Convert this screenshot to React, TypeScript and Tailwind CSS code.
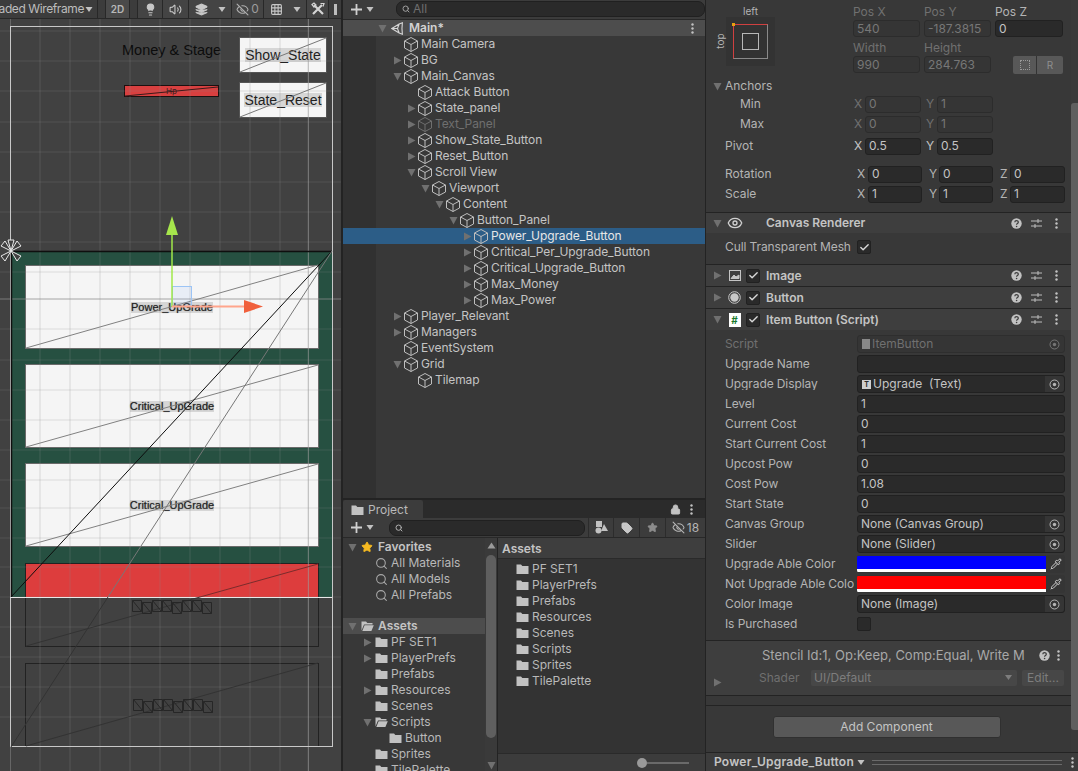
import React from "react";
import { Lightbulb, Volume2, Layers, EyeOff, Grid3x3, Lock, Tag, Star, Search, Check, Eye, Pipette } from "lucide-react";

const Tri = ({ dir, className = "" }: { dir: "r" | "d" | "u"; className?: string }) => (
  <svg width="10" height="10" viewBox="0.5 0.5 9 9" className={"shrink-0 " + className}>
    {dir === "r" && <polygon points="1.5,1 9,5 1.5,9" fill="#707070" />}
    {dir === "d" && <polygon points="1,1.5 9,1.5 5,9" fill="#707070" />}
    {dir === "u" && <polygon points="1,8 9,8 5,2" fill="#9a9a9a" />}
  </svg>
);

const Dots = ({ className = "" }: { className?: string }) => (
  <svg width="3" height="11" viewBox="0 0 3 11" className={"shrink-0 " + className}>
    <circle cx="1.5" cy="1.5" r="1.2" fill="#c2c2c2" />
    <circle cx="1.5" cy="5.5" r="1.2" fill="#c2c2c2" />
    <circle cx="1.5" cy="9.5" r="1.2" fill="#c2c2c2" />
  </svg>
);

const Caret = ({ className = "" }: { className?: string }) => (
  <svg width="8" height="5" viewBox="0 0 7 5" className={"shrink-0 " + className}><polygon points="0,0 7,0 3.5,5" fill="#c2c2c2" /></svg>
);

const Cube = ({ dim }: { dim?: boolean }) => (
  <svg width="14" height="15" viewBox="1 0.5 14 15" fill="none" stroke={dim ? "#6f6f6f" : "#bebebe"} strokeWidth="1" className="shrink-0">
    <path d="M8 1 14.5 4.5V11.5L8 15 1.5 11.5V4.5Z M1.5 4.5 8 8 14.5 4.5 M8 8V15" />
  </svg>
);

const Folder = ({ open }: { open?: boolean }) => (
  <svg width="13" height="12" viewBox="0 0 13 12" className="shrink-0">
    {open ? (
      <path d="M0.5 1.5H5L6.3 3H11.5V4.5H3L0.5 10.5ZM1.3 11 3.6 5.2H12.8L10.4 11Z" fill="#c2c2c2" />
    ) : (
      <path d="M0.5 1.5H5L6.3 3H12.5V11H0.5Z" fill="#c2c2c2" />
    )}
  </svg>
);

const UnityLogo = () => (
  <svg width="13" height="13" viewBox="0 0 16 16" fill="none" stroke="#d5d5d5" strokeWidth="1.4" className="shrink-0">
    <path d="M1 8 10 2.5 14 1 13.5 8 14 15 10 13.5Z M1 8H8L10 2.5 M8 8 10 13.5" />
  </svg>
);

const Row = ({ d, name, arrow, dim, sel }: { d: number; name: string; arrow?: "r" | "d"; dim?: boolean; sel?: boolean }) => {
  const pad = ["pl-[36px]", "pl-[50px]", "pl-[64px]", "pl-[78px]", "pl-[92px]", "pl-[106px]", "pl-[120px]"][d];
  return (
    <div className={"h-4 flex items-center " + pad + (sel ? " bg-[#2c5d87]" : "")}>
      <div className="w-[11px] shrink-0">{arrow && <Tri dir={arrow} className="w-[9px] h-[9px]" />}</div>
      <Cube dim={dim} />
      <span className={"ml-[3px] tracking-[-0.1px] " + (dim ? "text-[#6f6f6f]" : sel ? "text-[#e6e6e6]" : "text-[#c4c4c4]")}>{name}</span>
    </div>
  );
};

const Plus = () => (
  <div className="flex items-center gap-[3px] text-[#c8c8c8]">
    <svg width="13" height="13" viewBox="0 0 13 13"><path d="M6.5 1V12M1 6.5H12" stroke="#d0d0d0" strokeWidth="1.8" /></svg>
    <Caret />
  </div>
);

const TreeRow = ({ left, arrow, open, name }: { left: string; arrow?: "r" | "d"; open?: boolean; name: string }) => (
  <div className={"h-4 flex items-center " + left}>
    <div className="w-[12px] shrink-0">{arrow && <Tri dir={arrow} className="w-[9px] h-[9px]" />}</div>
    <Folder open={open} />
    <span className="ml-[3px] text-[#b9b9b9] whitespace-nowrap">{name}</span>
  </div>
);

const Field = ({ v, w, dim, h = "h-[17px]" }: { v: string; w: string; dim?: boolean; h?: string }) => (
  <div className={h + " " + w + " rounded-[3px] flex items-center px-[3px] shrink-0 " + (dim ? "bg-[#353535] border border-[#2c2c2c] text-[#777777]" : "bg-[#2a2a2a] border border-[#212121] text-[#c4c4c4]")}>
    {v}
  </div>
);

const Target = () => (
  <svg width="11" height="11" viewBox="0 0 11 11" className="shrink-0" fill="none">
    <circle cx="5.5" cy="5.5" r="4.5" stroke="#b5b5b5" strokeWidth="1" />
    <circle cx="5.5" cy="5.5" r="1.7" fill="#b5b5b5" />
  </svg>
);

const Help = () => (
  <svg width="11" height="11" viewBox="0 0 11 11" className="shrink-0"><circle cx="5.5" cy="5.5" r="5.2" fill="#c2c2c2" /><path d="M3.8 4.3c0-2.2 3.5-2.2 3.5 0 0 1.3-1.7 1.2-1.7 2.4" stroke="#3c3c3c" strokeWidth="1.2" fill="none" /><circle cx="5.6" cy="8.5" r=".8" fill="#3c3c3c" /></svg>
);

const HeaderTools = () => (
  <div className="ml-auto flex items-center text-[#bdbdbd] pr-[13px]">
    <Help />
    <svg width="11" height="11" viewBox="0 0 11 11" stroke="#bdbdbd" strokeWidth="1" fill="none" className="ml-[9px] mr-[13px]"><path d="M0 3H11M0 8H11M7 1V5M4 6V10" /></svg>
    <Dots />
  </div>
);

const Checkbox = ({ on = true }: { on?: boolean }) => (
  <div className="w-[14px] h-[14px] rounded-[2px] bg-[#2a2a2a] border border-[#212121] flex items-center justify-center shrink-0">
    {on && <Check size={11} strokeWidth={3} color="#d8d8d8" />}
  </div>
);

const CompHeader = ({ h, arrow, icon, check, title }: { h: string; arrow: "r" | "d"; icon: React.ReactNode; check?: boolean; title: string }) => (
  <div className={h + " flex items-center bg-[#3e3e3e] border-t border-[#232323] pl-[7px] shrink-0"}>
    <Tri dir={arrow} className="w-[9px] h-[9px]" />
    <div className="w-[17px] ml-[4px] flex justify-center shrink-0">{icon}</div>
    <div className="w-[17px] flex justify-end shrink-0">{check && <Checkbox />}</div>
    <span className="ml-[6px] font-semibold text-[#c4c4c4]">{title}</span>
    <HeaderTools />
  </div>
);

const PropRow = ({ label, dim, children }: { label: string; dim?: boolean; children: React.ReactNode }) => (
  <div className="h-5 flex items-center pl-[19px]">
    <div className={"w-[129px] mr-[3px] shrink-0 overflow-hidden whitespace-nowrap tracking-[-0.1px] " + (dim ? "text-[#707070]" : "text-[#b4b4b4]")}>{label}</div>
    {children}
  </div>
);

const Val = ({ children, dim }: { children?: React.ReactNode; dim?: boolean }) => (
  <div className={"w-[208px] h-[18px] rounded-[3px] flex items-center px-[3px] " + (dim ? "bg-[#353535] text-[#707070] border border-[#2e2e2e]" : "bg-[#2a2a2a] text-[#c4c4c4] border border-[#212121]")}>{children}</div>
);

const ObjVal = ({ text, icon }: { text: string; icon?: boolean }) => (
  <div className="w-[208px] h-[18px] rounded-[3px] flex items-center bg-[#2a2a2a] text-[#c4c4c4] border border-[#212121] pl-[2px]">
    {icon && <div className="w-[9px] h-[9px] bg-[#cfcfcf] mr-[2px] ml-[2px] flex items-center justify-center text-[7px] leading-none font-bold text-[#2a2a2a]">T</div>}
    <span className={"whitespace-pre " + (icon ? "" : "ml-[1px]")}>{text}</span>
    <div className="ml-auto w-[19px] h-full bg-[#353535] rounded-r-[3px] flex items-center justify-center"><Target /></div>
  </div>
);

const ColorVal = ({ bg }: { bg: string }) => (
  <div className="w-[208px] h-[18px] rounded-[3px] flex items-stretch bg-[#353535] overflow-hidden">
    <div className="w-[189px] h-[16px] flex flex-col mt-px">
      <div className={"flex-1 " + bg} />
      <div className="h-[3px] bg-white" />
    </div>
    <div className="flex-1 flex items-center justify-center"><Pipette size={12} color="#d0d0d0" /></div>
  </div>
);

const WireText = ({ text, cls }: { text: string; cls: string }) => (
  <span className={"leading-none whitespace-nowrap [font-family:'Liberation_Sans',sans-serif] " + cls}>{text}</span>
);

const BigBtn = ({ top, text }: { top: string; text: string }) => (
  <div className={"absolute left-[25px] w-[294px] h-[84px] bg-[#f5f5f5] border border-[#6a6a6a] flex items-center justify-center " + top}>
    <WireText text={text} cls="text-[11px] text-[#222222] bg-[#c9c9c9]/70 [text-shadow:0_0_1px_#666]" />
  </div>
);

const gridV = [40, 70, 100, 130, 160, 190, 220, 250, 280, 308];
const gridH = [31, 61, 91, 122, 152, 182, 212, 242, 272, 299, 329, 360, 390, 420, 450, 480, 508, 538, 567, 597, 627, 657, 687, 717];

const glyphBoxes = (x: number, y: number, key: string, count: number) => {
  const out: React.ReactNode[] = [];
  for (let i = 0; i < count; i++) {
    const cx = x + i * 10;
    const dy = i % 3 === 1 ? 2 : 0;
    out.push(<path key={key + i} d={`M${cx + 0.5} ${y + dy + 0.5}h9v11h-9zM${cx + 0.5} ${y + dy + 0.5}l9 11`} stroke="#262626" strokeWidth="1" fill="none" />);
  }
  return out;
};

const SceneOverlay = () => (
  <svg width="341" height="752" viewBox="0 19 341 752" className="absolute left-0 top-0">
    {gridV.map((x) => <line key={"v" + x} x1={x} x2={x} y1="19" y2="771" stroke="#8c8c8c" strokeOpacity="0.28" />)}
    {gridH.map((y) => <line key={"h" + y} y1={y} y2={y} x1="0" x2="341" stroke="#8c8c8c" strokeOpacity="0.24" />)}
    <line x1="0" x2="341" y1="299" y2="299" stroke="#8c8c8c" strokeOpacity="0.6" />
    <line x1="10.5" x2="10.5" y1="19" y2="771" stroke="#8c8c8c" strokeOpacity="0.5" />
    <line x1="308.5" x2="308.5" y1="19" y2="771" stroke="#a0a0a0" strokeOpacity="0.5" />
    <rect x="10.5" y="26.5" width="322" height="720" fill="none" stroke="#c8c8c8" />
    <line x1="10.5" x2="332" y1="597.5" y2="597.5" stroke="#e8e8e8" />
    <path d="M11.5 597V251.5H332" stroke="#0f0f0f" fill="none" strokeWidth="1.5" />
    <line x1="240" y1="72" x2="326" y2="38" stroke="#777" />
    <line x1="240" y1="117" x2="326" y2="83" stroke="#777" />
    <line x1="125" y1="96" x2="218" y2="87" stroke="#3a1a1a" />
    <line x1="26" y1="348" x2="318" y2="265" stroke="#808080" />
    <line x1="26" y1="447" x2="318" y2="365" stroke="#808080" />
    <line x1="26" y1="546" x2="318" y2="464" stroke="#808080" />
    <line x1="26" y1="646" x2="200" y2="597" stroke="#333" />
    <line x1="200" y1="597" x2="318" y2="564" stroke="#7a2c2c" />
    <line x1="26" y1="746" x2="318" y2="663" stroke="#333" />
    <line x1="11" y1="597" x2="332" y2="251" stroke="#0d0d0d" strokeWidth="1" />
    <line x1="108" y1="597" x2="332" y2="251" stroke="#777" />
    <line x1="11" y1="747" x2="108" y2="597" stroke="#333" />
    {glyphBoxes(132, 600, "a", 8)}
    {glyphBoxes(133, 699, "b", 8)}
    <rect x="172.5" y="286.5" width="19" height="20" fill="#8ab8ff" fillOpacity="0.12" stroke="#9cc4f5" />
    <line x1="172" y1="233" x2="172" y2="307" stroke="#a0e84a" strokeWidth="1.5" />
    <polygon points="172,216 166,235 178,235" fill="#a6e64c" />
    <line x1="172" y1="306.5" x2="246" y2="306.5" stroke="#ffa58c" strokeWidth="2" />
    <polygon points="263,306.5 244,300 244,313" fill="#f0603c" />
    <g stroke="#e8e8e8" fill="#404040" strokeWidth="1">
      <path d="M11 251 L1 246 L5 241Z" />
      <path d="M11 251 L8 240 L14 240Z" />
      <path d="M11 251 L21 246 L17 241Z" />
      <path d="M11 251 L1 256 L5 261Z" />
      <path d="M11 251 L21 256 L17 261Z" />
    </g>
  </svg>
);

const Scene = () => (
  <div className="w-[341px] h-full flex flex-col shrink-0">
    <div className="h-[19px] bg-[#3c3c3c] flex items-center text-[#bdbdbd] border-b border-[#282828] shrink-0 overflow-hidden">
      <div className="w-[98px] h-full flex items-center justify-end overflow-hidden border-r border-[#282828] shrink-0">
        <span className="whitespace-nowrap tracking-[-0.4px]">Shaded Wireframe</span>
        <Caret className="ml-[1px] mr-[4px]" />
      </div>
      <div className="w-[7px] shrink-0" />
      <div className="w-[25px] h-full bg-[#4a4a4a] flex items-center justify-center text-[10px] font-semibold text-[#b8b8b8] shrink-0 border-x border-[#282828]">2D</div>
      <div className="w-[7px] shrink-0" />
      <div className="w-[26px] h-full bg-[#444444] flex items-center justify-center shrink-0 border-x border-[#282828]"><Lightbulb size={13} fill="#c8c8c8" color="#c8c8c8" /></div>
      <div className="w-[26px] h-full bg-[#444444] flex items-center justify-center shrink-0 border-r border-[#282828]"><Volume2 size={13} color="#c8c8c8" /></div>
      <div className="w-[24px] h-full bg-[#444444] flex items-center justify-center shrink-0"><Layers size={13} color="#c8c8c8" fill="#c8c8c8" /></div>
      <div className="w-[19px] h-full bg-[#444444] flex items-center justify-center shrink-0 border-r border-[#282828]"><Caret /></div>
      <div className="w-[32px] h-full bg-[#444444] flex items-center justify-center gap-[2px] shrink-0 border-r border-[#282828] text-[#9c9c9c]"><EyeOff size={13} color="#b0b0b0" /><span>0</span></div>
      <div className="w-[24px] h-full bg-[#444444] flex items-center justify-center shrink-0"><Grid3x3 size={13} color="#c8c8c8" /></div>
      <div className="w-[19px] h-full bg-[#444444] flex items-center justify-center shrink-0 border-r border-[#282828]"><Caret /></div>
      <div className="w-[22px] h-full bg-[#444444] flex items-center justify-center shrink-0 border-r border-[#282828]">
        <svg width="14" height="14" viewBox="0 0 14 14" fill="none" stroke="#d4d4d4"><path d="M2 12 11 3M3 3l9 9" strokeWidth="2.2" /><path d="M1 2.5 3 1l2 2-2 2zM9.5 1.5l3.5 0-1 3" strokeWidth="1.2" /></svg>
      </div>
      <div className="w-[3px] h-[11px] bg-[#bdbdbd] ml-[5px] shrink-0" />
    </div>
    <div className="flex-1 relative bg-[#414141] overflow-hidden">
      <div className="absolute left-[11px] top-[232px] w-[321px] h-[346px] bg-[#265041]" />
      <div className="absolute left-[122px] top-[24px]"><WireText text="Money & Stage" cls="text-[14.5px] text-[#0c0c0c]" /></div>
      <div className="absolute left-[239px] top-[18px] w-[88px] h-[36px] bg-[#f5f5f5] border border-[#555] flex items-center justify-center"><WireText text="Show_State" cls="text-[14px] text-[#222222] bg-[#c9c9c9]/70" /></div>
      <div className="absolute left-[239px] top-[63px] w-[88px] h-[36px] bg-[#f5f5f5] border border-[#555] flex items-center justify-center"><WireText text="State_Reset" cls="text-[14px] text-[#222222] bg-[#c9c9c9]/70" /></div>
      <div className="absolute left-[124px] top-[66px] w-[95px] h-[12px] bg-[#d84040] border border-[#1c1010] flex items-center justify-center text-[8px] text-[#3a2020]">Hp</div>
      <BigBtn top="top-[246px]" text="Power_UpGrade" />
      <BigBtn top="top-[345px]" text="Critical_UpGrade" />
      <BigBtn top="top-[444px]" text="Critical_UpGrade" />
      <div className="absolute left-[25px] top-[544px] w-[294px] h-[34px] bg-[#dd3d3d]" />
      <div className="absolute left-[25px] top-[544px] w-[294px] h-[84px] border border-[#222]" />
      <div className="absolute left-[25px] top-[644px] w-[294px] h-[84px] border border-[#222]" />
      <SceneOverlay />
    </div>
  </div>
);

const Hierarchy = () => (
  <div className="flex-1 min-h-0 flex flex-col bg-[#383838]">
    <div className="h-[20px] bg-[#3c3c3c] flex items-center pl-[7px] pb-[1px] border-b border-[#282828] shrink-0">
      <Plus />
      <div className="ml-[22px] w-[309px] h-[16px] rounded-[7px] bg-[#2a2a2a] flex items-center pl-[5px] text-[#6f6f6f] border border-[#202020]">
        <Search size={8} color="#a0a0a0" strokeWidth={3} />
        <span className="ml-[3px]">All</span>
      </div>
    </div>
    <div className="h-[16px] bg-[#4d4d4d] flex items-center pl-[35px] shrink-0">
      <Tri dir="d" className="w-[9px] h-[9px]" />
      <div className="ml-[4px]"><UnityLogo /></div>
      <span className="ml-[5px] font-semibold text-[#d2d2d2]">Main*</span>
      <div className="ml-auto pr-[11px]"><Dots /></div>
    </div>
    <div className="flex-1 bg-[linear-gradient(to_right,#313131_33px,#383838_33px)]">
      <Row d={1} name="Main Camera" />
      <Row d={1} name="BG" arrow="r" />
      <Row d={1} name="Main_Canvas" arrow="d" />
      <Row d={2} name="Attack Button" />
      <Row d={2} name="State_panel" arrow="r" />
      <Row d={2} name="Text_Panel" arrow="r" dim />
      <Row d={2} name="Show_State_Button" arrow="r" />
      <Row d={2} name="Reset_Button" arrow="r" />
      <Row d={2} name="Scroll View" arrow="d" />
      <Row d={3} name="Viewport" arrow="d" />
      <Row d={4} name="Content" arrow="d" />
      <Row d={5} name="Button_Panel" arrow="d" />
      <Row d={6} name="Power_Upgrade_Button" arrow="r" sel />
      <Row d={6} name="Critical_Per_Upgrade_Button" arrow="r" />
      <Row d={6} name="Critical_Upgrade_Button" arrow="r" />
      <Row d={6} name="Max_Money" arrow="r" />
      <Row d={6} name="Max_Power" arrow="r" />
      <Row d={1} name="Player_Relevant" arrow="r" />
      <Row d={1} name="Managers" arrow="r" />
      <Row d={1} name="EventSystem" />
      <Row d={1} name="Grid" arrow="d" />
      <Row d={2} name="Tilemap" />
    </div>
  </div>
);

const Project = () => (
  <div className="h-[273px] shrink-0 flex flex-col bg-[#383838] border-t-[2px] border-[#232323]">
    <div className="h-[18px] flex items-stretch bg-[#2b2b2b] shrink-0">
      <div className="w-[80px] bg-[#3c3c3c] flex items-center pl-[8px] pt-[1px] text-[#b9b9b9] rounded-t-[2px]">
        <Folder /><span className="ml-[4px]">Project</span>
      </div>
      <div className="ml-auto flex items-center gap-[9px] pr-[12px]">
        <Lock size={11} color="#c2c2c2" fill="#c2c2c2" />
        <Dots />
      </div>
    </div>
    <div className="h-[20px] bg-[#3c3c3c] flex items-center pl-[7px] border-b border-[#282828] shrink-0">
      <Plus />
      <div className="ml-[15px] w-[196px] h-[16px] rounded-[7px] bg-[#2a2a2a] flex items-center pl-[5px] border border-[#202020]">
        <Search size={8} color="#b0b0b0" strokeWidth={3} />
      </div>
      <div className="ml-[3px] flex-1 flex h-full">
        <div className="w-[26px] flex items-center justify-center border-x border-[#2c2c2c]"><svg width="13" height="13" viewBox="0 0 13 13"><rect x="1" y="0" width="6" height="6" fill="#c2c2c2" /><circle cx="3.5" cy="9.5" r="3" fill="#c2c2c2" /><polygon points="9,3 13,10 6,10" fill="#c2c2c2" /></svg></div>
        <div className="w-[26px] flex items-center justify-center border-r border-[#2c2c2c]"><Tag size={12} color="#c8c8c8" fill="#c8c8c8" /></div>
        <div className="w-[26px] flex items-center justify-center border-r border-[#2c2c2c]"><Star size={11} color="#8c8c8c" fill="#8c8c8c" /></div>
        <div className="flex-1 flex items-center justify-center gap-[2px] text-[#b5b5b5]"><EyeOff size={13} color="#b5b5b5" /><span>18</span></div>
      </div>
    </div>
    <div className="flex-1 flex min-h-0">
      <div className="w-[142px] shrink-0 overflow-hidden pt-px">
        <div className="h-4 flex items-center pl-[5px]">
          <Tri dir="d" className="w-[9px] h-[9px]" />
          <Star size={12} color="#f5b921" fill="#f5b921" className="ml-[4px]" />
          <span className="ml-[5px] font-semibold text-[#c4c4c4]">Favorites</span>
        </div>
        {["All Materials", "All Models", "All Prefabs"].map((n) => (
          <div key={n} className="h-4 flex items-center pl-[32px]">
            <Search size={13} color="#a8a8a8" />
            <span className="ml-[3px] text-[#b9b9b9]">{n}</span>
          </div>
        ))}
        <div className="h-[15px]" />
        <div className="h-4 flex items-center pl-[5px] bg-[#4d4d4d]">
          <Tri dir="d" className="w-[9px] h-[9px]" />
          <div className="ml-[4px]"><Folder open /></div>
          <span className="ml-[4px] font-semibold text-[#c4c4c4]">Assets</span>
        </div>
        <TreeRow left="pl-[20px]" arrow="r" name="PF SET1" />
        <TreeRow left="pl-[20px]" arrow="r" name="PlayerPrefs" />
        <TreeRow left="pl-[20px]" name="Prefabs" />
        <TreeRow left="pl-[20px]" arrow="r" name="Resources" />
        <TreeRow left="pl-[20px]" name="Scenes" />
        <TreeRow left="pl-[20px]" arrow="d" open name="Scripts" />
        <TreeRow left="pl-[34px]" name="Button" />
        <TreeRow left="pl-[20px]" name="Sprites" />
        <TreeRow left="pl-[20px]" name="TilePalette" />
      </div>
      <div className="w-[13px] shrink-0 flex flex-col items-center bg-[#3a3a3a] border-r border-[#232323]">
        <Tri dir="u" className="mt-[3px] w-[9px] h-[9px]" />
        <div className="w-[10px] h-[183px] mt-[5px] rounded-full bg-[#5f5f5f]" />
        <Tri dir="d" className="mt-auto mb-[1px] w-[9px] h-[9px]" />
      </div>
      <div className="flex-1 flex flex-col bg-[#333333]">
        <div className="h-[21px] bg-[#3e3e3e] flex items-center pl-[4px] pt-[1px] font-semibold text-[#c4c4c4] border-b border-[#2a2a2a] shrink-0">Assets</div>
        <div className="flex-1 pt-[2px]">
          {["PF SET1", "PlayerPrefs", "Prefabs", "Resources", "Scenes", "Scripts", "Sprites", "TilePalette"].map((n) => (
            <TreeRow key={n} left="pl-[6px]" name={n} />
          ))}
        </div>
        <div className="h-[18px] bg-[#3c3c3c] border-t border-[#2a2a2a] flex items-center justify-end pr-[16px] shrink-0">
          <div className="w-[10px] h-[10px] rounded-full bg-[#9a9a9a]" />
          <div className="w-[42px] h-[2px] bg-[#6a6a6a]" />
        </div>
      </div>
    </div>
  </div>
);

const AnchorWidget = () => (
  <div className="ml-[20px] w-[49px] relative shrink-0">
    <div className="text-center text-[#b4b4b4] h-[17px] text-[10px] leading-[22px]">left</div>
    <div className="absolute -left-[14px] top-[36px] -rotate-90 text-[10px] text-[#b4b4b4]">top</div>
    <div className="w-[49px] h-[49px] bg-[#333333] flex items-center justify-center">
      <div className="relative w-[35px] h-[35px] border border-[#8a8a8a] border-l-[#d04040] border-t-[#d04040] flex items-center justify-center">
        <div className="w-[17px] h-[17px] border border-[#b8b8b8]" />
        <div className="absolute -left-[2px] -top-[2px] w-[3px] h-[3px] bg-[#e8a010]" />
      </div>
    </div>
  </div>
);

const Lbl = ({ t, cls }: { t: string; cls: string }) => <div className={"shrink-0 " + cls}>{t}</div>;

const Inspector = () => (
  <div className="w-[373px] shrink-0 h-full flex flex-col bg-[#383838] border-l border-[#232323]">
    <div className="flex-1 min-h-0 flex">
      <div className="flex-1 min-w-0 flex flex-col">
        <div className="h-[78px] flex shrink-0">
          <AnchorWidget />
          <div className="ml-[78px] pt-[4px] grid grid-cols-[67px_67px_68px] gap-x-[4px] content-start">
            <div className="h-4 leading-4 text-[#707070]">Pos X</div>
            <div className="h-4 leading-4 text-[#707070]">Pos Y</div>
            <div className="h-4 leading-4 text-[#b4b4b4]">Pos Z</div>
            <Field v="540" w="w-[67px]" dim />
            <Field v="-187.3815" w="w-[67px]" dim />
            <Field v="0" w="w-[68px]" />
            <div className="h-4 leading-4 text-[#707070] mt-[3px]">Width</div>
            <div className="h-4 leading-4 text-[#707070] mt-[3px]">Height</div>
            <div className="mt-[3px]" />
            <Field v="990" w="w-[67px]" dim />
            <Field v="284.763" w="w-[67px]" dim />
            <div className="flex justify-end">
              <div className="w-[50px] h-[18px] bg-[#585858] rounded-[2px] flex items-center text-[#8f8f8f] text-[10px]">
                <div className="w-[24px] flex justify-center border-r border-[#333] h-full items-center"><div className="w-[10px] h-[10px] border border-dotted border-[#9a9a9a]" /></div>
                <div className="flex-1 text-center">R</div>
              </div>
            </div>
          </div>
        </div>
        <div className="h-[16px] flex items-center pl-[7px] text-[#b4b4b4] shrink-0">
          <Tri dir="d" className="w-[9px] h-[9px]" /><span className="ml-[3px]">Anchors</span>
        </div>
        <div className="h-[18px] mt-[1px] flex items-center shrink-0">
          <Lbl t="Min" cls="w-[148px] pl-[34px] text-[#b4b4b4]" />
          <Lbl t="X" cls="w-[11px] text-[#707070]" /><Field v="0" w="w-[56px]" dim />
          <Lbl t="Y" cls="ml-[5px] w-[11px] text-[#707070]" /><Field v="1" w="w-[56px]" dim />
        </div>
        <div className="h-[18px] mt-[2px] flex items-center shrink-0">
          <Lbl t="Max" cls="w-[148px] pl-[34px] text-[#b4b4b4]" />
          <Lbl t="X" cls="w-[11px] text-[#707070]" /><Field v="0" w="w-[56px]" dim />
          <Lbl t="Y" cls="ml-[5px] w-[11px] text-[#707070]" /><Field v="1" w="w-[56px]" dim />
        </div>
        <div className="h-[18px] mt-[4px] flex items-center shrink-0">
          <Lbl t="Pivot" cls="w-[148px] pl-[19px] text-[#b4b4b4]" />
          <Lbl t="X" cls="w-[11px] text-[#c4c4c4]" /><Field v="0.5" w="w-[56px]" />
          <Lbl t="Y" cls="ml-[5px] w-[11px] text-[#c4c4c4]" /><Field v="0.5" w="w-[56px]" />
        </div>
        <div className="h-[18px] mt-[10px] flex items-center shrink-0">
          <Lbl t="Rotation" cls="w-[151px] pl-[19px] text-[#b4b4b4]" />
          <Lbl t="X" cls="w-[11px] text-[#b4b4b4]" /><Field v="0" w="w-[54px]" />
          <Lbl t="Y" cls="ml-[7px] w-[10px] text-[#b4b4b4]" /><Field v="0" w="w-[54px]" />
          <Lbl t="Z" cls="ml-[7px] w-[10px] text-[#b4b4b4]" /><Field v="0" w="w-[55px]" />
        </div>
        <div className="h-[18px] mt-[2px] flex items-center shrink-0">
          <Lbl t="Scale" cls="w-[151px] pl-[19px] text-[#b4b4b4]" />
          <Lbl t="X" cls="w-[11px] text-[#b4b4b4]" /><Field v="1" w="w-[54px]" />
          <Lbl t="Y" cls="ml-[7px] w-[10px] text-[#b4b4b4]" /><Field v="1" w="w-[54px]" />
          <Lbl t="Z" cls="ml-[7px] w-[10px] text-[#b4b4b4]" /><Field v="1" w="w-[55px]" />
        </div>
        <div className="h-[9px] shrink-0" />
        <CompHeader h="h-[21px]" arrow="d" icon={<Eye size={16} color="#d0d0d0" />} title="Canvas Renderer" />
        <div className="h-[31px] flex items-center pl-[19px] pb-[3px] shrink-0">
          <span className="text-[#b4b4b4] w-[132px] whitespace-nowrap tracking-[-0.1px]">Cull Transparent Mesh</span>
          <Checkbox />
        </div>
        <CompHeader h="h-[22px]" arrow="r" icon={<svg width="14" height="13" viewBox="0 0 14 13" fill="none" stroke="#c4c4c4"><rect x="1.5" y="1.5" width="11" height="10" /><path d="M3 9.5 6 6l2 2 3-2v3.5z" fill="#c4c4c4" /></svg>} check title="Image" />
        <CompHeader h="h-[22px]" arrow="r" icon={<svg width="13" height="13" viewBox="0 0 13 13"><circle cx="6.5" cy="6.5" r="5.8" fill="none" stroke="#c8c8c8" /><circle cx="6.5" cy="6.5" r="4.2" fill="#c8c8c8" /></svg>} check title="Button" />
        <CompHeader h="h-[22px]" arrow="d" icon={<div className="w-[12px] h-[14px] bg-white flex items-center justify-center text-[10px] leading-none font-bold text-[#1a7a2e]">#</div>} check title="Item Button (Script)" />
        <div className="pt-[4px] shrink-0 border-b border-[#232323] pb-[6px]">
          <PropRow label="Script" dim>
            <div className="w-[208px] h-[18px] rounded-[3px] flex items-center bg-[#353535] text-[#707070] border border-[#2e2e2e] pl-[4px]">
              <div className="w-[8px] h-[10px] bg-[#888] mr-[2px]" /><span>ItemButton</span>
              <div className="ml-auto mr-[4px] opacity-50"><Target /></div>
            </div>
          </PropRow>
          <PropRow label="Upgrade Name"><Val /></PropRow>
          <PropRow label="Upgrade Display"><ObjVal text="Upgrade  (Text)" icon /></PropRow>
          <PropRow label="Level"><Val>1</Val></PropRow>
          <PropRow label="Current Cost"><Val>0</Val></PropRow>
          <PropRow label="Start Current Cost"><Val>1</Val></PropRow>
          <PropRow label="Upcost Pow"><Val>0</Val></PropRow>
          <PropRow label="Cost Pow"><Val>1.08</Val></PropRow>
          <PropRow label="Start State"><Val>0</Val></PropRow>
          <PropRow label="Canvas Group"><ObjVal text="None (Canvas Group)" /></PropRow>
          <PropRow label="Slider"><ObjVal text="None (Slider)" /></PropRow>
          <PropRow label="Upgrade Able Color"><ColorVal bg="bg-[#0000ff]" /></PropRow>
          <PropRow label="Not Upgrade Able Colo"><ColorVal bg="bg-[#ff0000]" /></PropRow>
          <PropRow label="Color Image"><ObjVal text="None (Image)" /></PropRow>
          <PropRow label="Is Purchased"><Checkbox on={false} /></PropRow>
        </div>
        <div className="h-[55px] bg-[#3e3e3e] border-b border-[#232323] shrink-0 flex flex-col pl-[7px]">
          <div className="h-[28px] flex items-center pl-[49px] text-[#a8a8a8]">
            <span className="w-[268px] text-[13px] overflow-hidden whitespace-nowrap">Stencil Id:1, Op:Keep, Comp:Equal, Write M</span>
            <div className="ml-[9px]"><Help /></div>
            <Dots className="ml-[7px]" />
          </div>
          <div className="h-[18px] flex items-center">
            <Tri dir="r" className="w-[9px] h-[9px] mt-[8px]" />
            <span className="ml-[37px] w-[52px] text-[#707070]">Shader</span>
            <div className="w-[206px] h-[16px] bg-[#474747] rounded-[2px] flex items-center pl-[3px] text-[#7d7d7d] -mt-[1px]">UI/Default
              <svg width="7" height="5" viewBox="0 0 7 5" className="ml-auto mr-[5px]"><polygon points="0,0 7,0 3.5,5" fill="#7d7d7d" /></svg>
            </div>
            <div className="ml-[5px] w-[42px] h-[16px] bg-[#474747] rounded-[2px] flex items-center justify-center text-[#7d7d7d] -mt-[1px]">Edit...</div>
          </div>
        </div>
        <div className="h-[10px] border-b border-[#232323] shrink-0" />
        <div className="flex justify-center pt-[10px] shrink-0 pr-[4px]">
          <div className="w-[228px] h-[22px] bg-[#585858] rounded-[3px] border border-[#303030] flex items-center justify-center text-[#c4c4c4]">Add Component</div>
        </div>
      </div>
      <div className="w-[7px] shrink-0 flex flex-col bg-[#3a3a3a]">
        <div className="h-[103px] shrink-0" />
        <div className="h-[627px] bg-[#5f5f5f] rounded-l-[3px] shrink-0" />
      </div>
    </div>
    <div className="h-[19px] bg-[#3c3c3c] border-t border-[#232323] flex items-center pl-[8px] shrink-0">
      <span className="font-semibold text-[#c4c4c4] whitespace-nowrap tracking-[0.22px]">Power_Upgrade_Button</span>
      <Caret className="ml-[3px]" />
      <div className="ml-[7px] w-[190px] h-[5px] border-y border-[#6a6a6a]" />
      <Dots className="ml-[9px]" />
    </div>
  </div>
);

export default function App() {
  return (
    <div className="w-[1078px] h-[771px] flex overflow-hidden bg-[#232323] text-[12px] leading-none [font-family:Inter,sans-serif]">
      <Scene />
      <div className="w-[2px] bg-[#232323] shrink-0" />
      <div className="w-[362px] h-full flex flex-col shrink-0">
        <Hierarchy />
        <Project />
      </div>
      <Inspector />
    </div>
  );
}
